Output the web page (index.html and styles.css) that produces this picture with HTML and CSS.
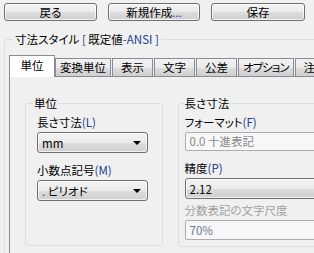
FILE: index.html
```html
<!DOCTYPE html>
<html lang="ja">
<head>
    <meta charset="UTF-8">
    <title>寸法スタイル</title>
    <link rel="stylesheet" href="styles.css">
</head>
<body>
    <!-- barra dei pulsanti -->
    <div class="toolbar">
        <button class="btn btn-back">戻る</button>
        <button class="btn btn-new">新規作成<span class="key">...</span></button>
        <button class="btn btn-save">保存</button>
    </div>

    <fieldset class="style-box">
        <legend>寸法スタイル <span class="key">[</span> 既定値<span class="key">-ANSI ]</span></legend>

        <div class="tabs">
            <div class="tab active">単位</div>
            <div class="tab">変換単位</div>
            <div class="tab">表示</div>
            <div class="tab">文字</div>
            <div class="tab">公差</div>
            <div class="tab tab-narrow">オプション</div>
            <div class="tab">注記</div>
        </div>

        <div class="tab-page">
            <fieldset class="group group-unit">
                <legend>単位</legend>
                <div class="label">長さ寸法<span class="key">(L)</span></div>
                <div class="combo"><span>mm</span><i class="arrow"></i></div>
                <div class="label label-gap">小数点記号<span class="key">(M)</span></div>
                <div class="combo"><span><span class="key">.</span> ピリオド</span><i class="arrow"></i></div>
            </fieldset>

            <fieldset class="group group-length">
                <legend>長さ寸法</legend>
                <div class="label">フォーマット<span class="key">(F)</span></div>
                <div class="field disabled">0.0 十進表記</div>
                <div class="label label-gap">精度<span class="key">(P)</span></div>
                <div class="combo"><span>2.12</span><i class="arrow"></i></div>
                <div class="label muted">分数表記の文字尺度</div>
                <div class="field field-tall">70%</div>
            </fieldset>
        </div>
    </fieldset>
</body>
</html>
```

FILE: styles.css
```css
/* pagina in stile finestra di dialogo */
body {
    margin: 0;
    background: #f0f0f0;
    font-family: "Noto Sans CJK JP", "Noto Sans", sans-serif;
    font-size: 11.5px;
    line-height: 14px;
    color: #000;
    overflow: hidden;
    height: 253px;
    font-feature-settings: "palt";
}
.key {
    color: #23408f; /* caratteri latini un po' bluastri */
}

/* pulsanti in alto */
.toolbar {
    display: flex;
    gap: 11px;
    padding: 3px 0 0 4px;
}
.btn {
    height: 18px;
    padding: 0;
    font: inherit;
    line-height: 14px;
    color: #000;
    border: 1px solid #707070;
    border-radius: 3px;
    background: linear-gradient(#f3f3f3 0%, #ebebeb 50%, #dddddd 51%, #cfcfcf 100%);
    box-shadow: inset 0 0 0 1px rgba(255, 255, 255, 0.7);
}
.btn-back { width: 93px; }
.btn-new { width: 92px; }
.btn-save { width: 94px; }

/* riquadro esterno */
.style-box {
    margin: 11px 0 0 4px;
    padding: 9px 0 0 4px;
    width: 340px;
    border: 1px solid #d5dfe5;
    border-radius: 3px;
    min-inline-size: 0;
}
.style-box > legend {
    padding: 0 2px;
    margin-left: 4px;
}

/* schede */
.tabs {
    display: flex;
    align-items: flex-end;
    gap: 1px;
    height: 21px;
}
.tab {
    flex: none;
    height: 17px;
    padding: 0 4px;
    min-width: 31px;
    text-align: center;
    line-height: 17px;
    border: 1px solid #898c95;
    border-bottom: none;
    background: linear-gradient(#f2f2f2 0%, #ebebeb 50%, #dddddd 51%, #cfcfcf 100%);
}
.tab.active {
    height: 21px;
    min-width: 36px;
    line-height: 19px;
    background: #fff;
    margin-right: -1px;
    margin-bottom: -1px;
    position: relative;
    z-index: 1;
}
.tab-narrow {
    letter-spacing: -1px;
}
.tab-page {
    display: flex;
    align-items: flex-start;
    gap: 15px;
    height: 200px;
    padding: 19px 0 0 15px;
    border: 1px solid #898c95;
}

/* gruppi interni */
.group {
    margin: 0;
    border: 1px solid #d5dfe5;
    border-radius: 3px;
    min-inline-size: 0;
}
.group > legend {
    padding: 0 1px;
}
.group-unit {
    width: 136px;
    padding: 5px 14px 44px 11px;
}
.group-unit > legend {
    margin-left: -4px;
}
.group-length {
    width: 200px;
    padding: 5px 0 6px 6px;
}
.group-length > legend {
    margin-left: -1px;
}
.label {
    height: 14px;
    margin-bottom: 3px;
}
.label-gap {
    margin-top: 10px;
}
.muted {
    color: #a0a0a0;
    margin-top: 4px;
}

/* caselle a discesa */
.combo {
    display: flex;
    align-items: center;
    justify-content: space-between;
    height: 19px;
    padding: 0 6px 0 4px;
    border: 1px solid #707070;
    border-radius: 3px;
    background: linear-gradient(#f3f3f3 0%, #ebebeb 50%, #dddddd 51%, #cfcfcf 100%);
    box-shadow: inset 0 0 0 1px rgba(255, 255, 255, 0.7);
}
.arrow {
    width: 0;
    height: 0;
    border-left: 4px solid transparent;
    border-right: 4px solid transparent;
    border-top: 4px solid #000;
}

/* campi di testo */
.field {
    height: 17px;
    line-height: 17px;
    padding: 0 4px;
    border: 1px solid #abadb3;
    border-radius: 2px;
    background: #f7f7f7;
    color: #6e7a98;
}
.field-tall {
    height: 18px;
    line-height: 18px;
}
.field.disabled {
    color: #8a8a8a;
}
```
